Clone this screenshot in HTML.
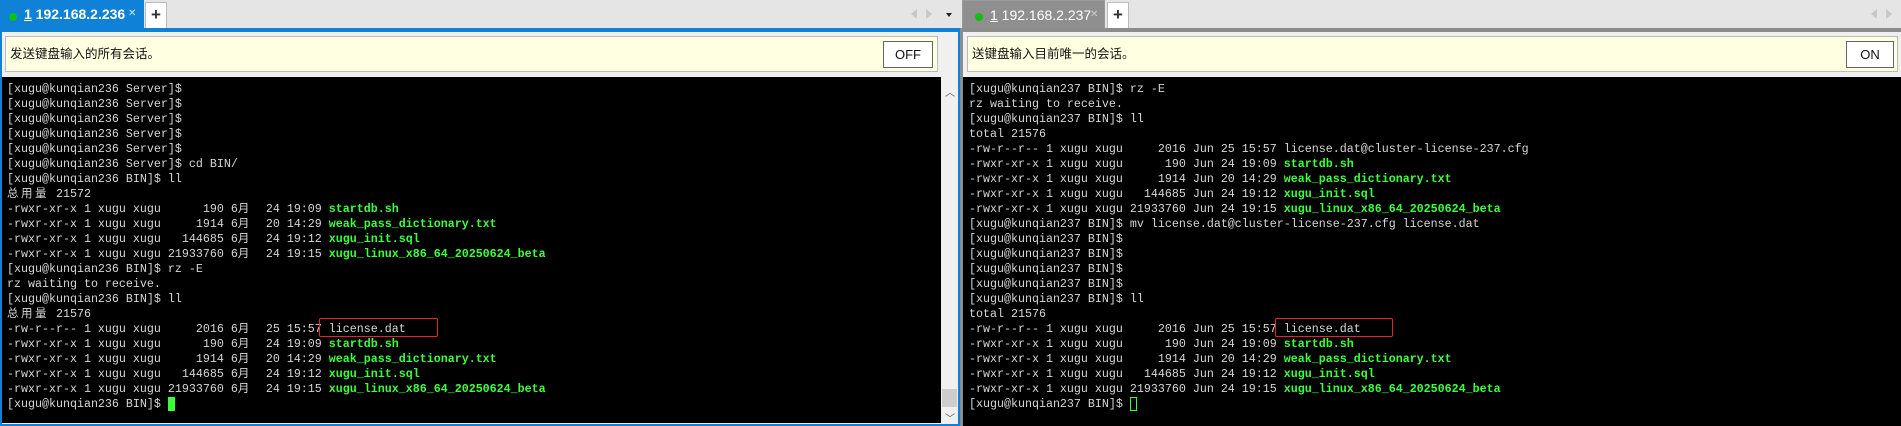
<!DOCTYPE html>
<html><head><meta charset="utf-8"><style>
*{margin:0;padding:0;box-sizing:border-box}
body{width:1901px;height:426px;background:#e5e5e5;position:relative;overflow:hidden;font-family:"Liberation Sans","Noto Sans CJK SC",sans-serif}
.abs{position:absolute}
.tab{position:absolute;top:0;height:28px;font-size:14px;line-height:28px}
.dot{position:absolute;width:8px;height:8px;border-radius:50%;background:#10c010;top:13px}
.plus{position:absolute;top:2px;height:26px;width:22px;background:#fff;border:1px solid #bbb;border-bottom:none;text-align:center;font-size:17px;line-height:24px;color:#333;font-weight:bold}
.info{position:absolute;top:36px;height:36px;background:#ffffe2;border:1px solid #bbb;font-size:12.5px;line-height:34px;padding-left:4px;color:#111}
.btn{position:absolute;top:41px;height:27px;background:#fff;border:1px solid #666;font-size:13px;text-align:center;line-height:25px;color:#111}
.term{position:absolute;top:77px;background:#000}
pre{position:absolute;top:82px;font-family:"Liberation Mono",monospace;font-size:11.67px;line-height:15px;color:#d6d6d6;white-space:pre}
.g{color:#3cff3c;font-weight:bold}
.c{font-family:"Noto Sans CJK SC",sans-serif;font-size:11.5px;letter-spacing:2.5px;line-height:8px}
.box{position:absolute;border:1.5px solid #e8232a;border-radius:2px;height:19px}
.arr{position:absolute;width:0;height:0;border-top:5px solid transparent;border-bottom:5px solid transparent}
</style></head><body>
<!-- left pane -->
<div class="tab" style="left:0;width:144px;background:#0f82d8;color:#fff">
 <div class="dot" style="left:9px"></div>
 <span class="abs" style="left:24px;font-weight:bold"><u>1</u> 192.168.2.236</span>
 <span class="abs" style="left:128px;font-size:10px;color:#cfe4f6">✕</span>
</div>
<div class="plus" style="left:145px">+</div>
<div class="arr" style="left:911px;top:9px;border-right:6px solid #c8c8c8"></div>
<div class="arr" style="left:926px;top:9px;border-left:6px solid #c8c8c8"></div>
<div class="abs" style="left:946px;top:13px;width:0;height:0;border-left:3.5px solid transparent;border-right:3.5px solid transparent;border-top:4px solid #222"></div>
<div class="abs" style="left:0;top:28px;width:960px;height:398px;background:#f0f0f0;border:2px solid #0f82d8;border-top:4px solid #0f82d8"></div>
<div class="info" style="left:5px;width:933px">发送键盘输入的所有会话。</div>
<div class="btn" style="left:883px;width:50px">OFF</div>
<div class="term" style="left:2px;width:939px;height:346px"></div>
<div class="abs" style="left:941px;top:77px;width:17px;height:346px;background:#f0f0f0"></div>
<div class="abs" style="left:945px;top:84px;color:#555;font-size:10px">︿</div>
<div class="abs" style="left:942px;top:389px;width:15px;height:18px;background:#cdcdcd"></div>
<div class="abs" style="left:945px;top:410px;color:#555;font-size:10px">﹀</div>
<pre style="left:7px">[xugu@kunqian236 Server]$
[xugu@kunqian236 Server]$
[xugu@kunqian236 Server]$
[xugu@kunqian236 Server]$
[xugu@kunqian236 Server]$
[xugu@kunqian236 Server]$ cd BIN/
[xugu@kunqian236 BIN]$ ll
<span class="c">总用量</span> 21572
-rwxr-xr-x 1 xugu xugu      190 6<span class="c">月</span>  24 19:09 <span class="g">startdb.sh</span>
-rwxr-xr-x 1 xugu xugu     1914 6<span class="c">月</span>  20 14:29 <span class="g">weak_pass_dictionary.txt</span>
-rwxr-xr-x 1 xugu xugu   144685 6<span class="c">月</span>  24 19:12 <span class="g">xugu_init.sql</span>
-rwxr-xr-x 1 xugu xugu 21933760 6<span class="c">月</span>  24 19:15 <span class="g">xugu_linux_x86_64_20250624_beta</span>
[xugu@kunqian236 BIN]$ rz -E
rz waiting to receive.
[xugu@kunqian236 BIN]$ ll
<span class="c">总用量</span> 21576
-rw-r--r-- 1 xugu xugu     2016 6<span class="c">月</span>  25 15:57 license.dat
-rwxr-xr-x 1 xugu xugu      190 6<span class="c">月</span>  24 19:09 <span class="g">startdb.sh</span>
-rwxr-xr-x 1 xugu xugu     1914 6<span class="c">月</span>  20 14:29 <span class="g">weak_pass_dictionary.txt</span>
-rwxr-xr-x 1 xugu xugu   144685 6<span class="c">月</span>  24 19:12 <span class="g">xugu_init.sql</span>
-rwxr-xr-x 1 xugu xugu 21933760 6<span class="c">月</span>  24 19:15 <span class="g">xugu_linux_x86_64_20250624_beta</span>
[xugu@kunqian236 BIN]$ <span style="background:#3cff3c"> </span></pre>
<div class="box" style="left:319px;top:318px;width:119px"></div>

<!-- right pane -->
<div class="tab" style="left:962px;width:143px;background:#8f8f8f;color:#fff;border:1px solid #999;border-bottom:none">
 <div class="dot" style="left:12px;top:12px"></div>
 <span class="abs" style="left:27px"><u>1</u> 192.168.2.237</span>
 <span class="abs" style="left:127px;font-size:10px;color:#ccc">✕</span>
</div>
<div class="plus" style="left:1107px">+</div>
<div class="arr" style="left:1871px;top:9px;border-right:6px solid #c8c8c8"></div>
<div class="arr" style="left:1886px;top:9px;border-left:6px solid #c8c8c8"></div>
<div class="abs" style="left:960px;top:28px;width:941px;height:398px;background:#f0f0f0;border-left:3px solid #8c8c8c;border-top:4px solid #8c8c8c"></div>
<div class="info" style="left:967px;width:931px">送键盘输入目前唯一的会话。</div>
<div class="btn" style="left:1846px;width:48px">ON</div>
<div class="term" style="left:963px;width:938px;height:349px"></div>
<pre style="left:969px">[xugu@kunqian237 BIN]$ rz -E
rz waiting to receive.
[xugu@kunqian237 BIN]$ ll
total 21576
-rw-r--r-- 1 xugu xugu     2016 Jun 25 15:57 license.dat@cluster-license-237.cfg
-rwxr-xr-x 1 xugu xugu      190 Jun 24 19:09 <span class="g">startdb.sh</span>
-rwxr-xr-x 1 xugu xugu     1914 Jun 20 14:29 <span class="g">weak_pass_dictionary.txt</span>
-rwxr-xr-x 1 xugu xugu   144685 Jun 24 19:12 <span class="g">xugu_init.sql</span>
-rwxr-xr-x 1 xugu xugu 21933760 Jun 24 19:15 <span class="g">xugu_linux_x86_64_20250624_beta</span>
[xugu@kunqian237 BIN]$ mv license.dat@cluster-license-237.cfg license.dat
[xugu@kunqian237 BIN]$
[xugu@kunqian237 BIN]$
[xugu@kunqian237 BIN]$
[xugu@kunqian237 BIN]$
[xugu@kunqian237 BIN]$ ll
total 21576
-rw-r--r-- 1 xugu xugu     2016 Jun 25 15:57 license.dat
-rwxr-xr-x 1 xugu xugu      190 Jun 24 19:09 <span class="g">startdb.sh</span>
-rwxr-xr-x 1 xugu xugu     1914 Jun 20 14:29 <span class="g">weak_pass_dictionary.txt</span>
-rwxr-xr-x 1 xugu xugu   144685 Jun 24 19:12 <span class="g">xugu_init.sql</span>
-rwxr-xr-x 1 xugu xugu 21933760 Jun 24 19:15 <span class="g">xugu_linux_x86_64_20250624_beta</span>
[xugu@kunqian237 BIN]$ <span style="outline:1px solid #3cff3c;outline-offset:-1px"> </span></pre>
<div class="box" style="left:1275px;top:318px;width:118px"></div>
</body></html>
